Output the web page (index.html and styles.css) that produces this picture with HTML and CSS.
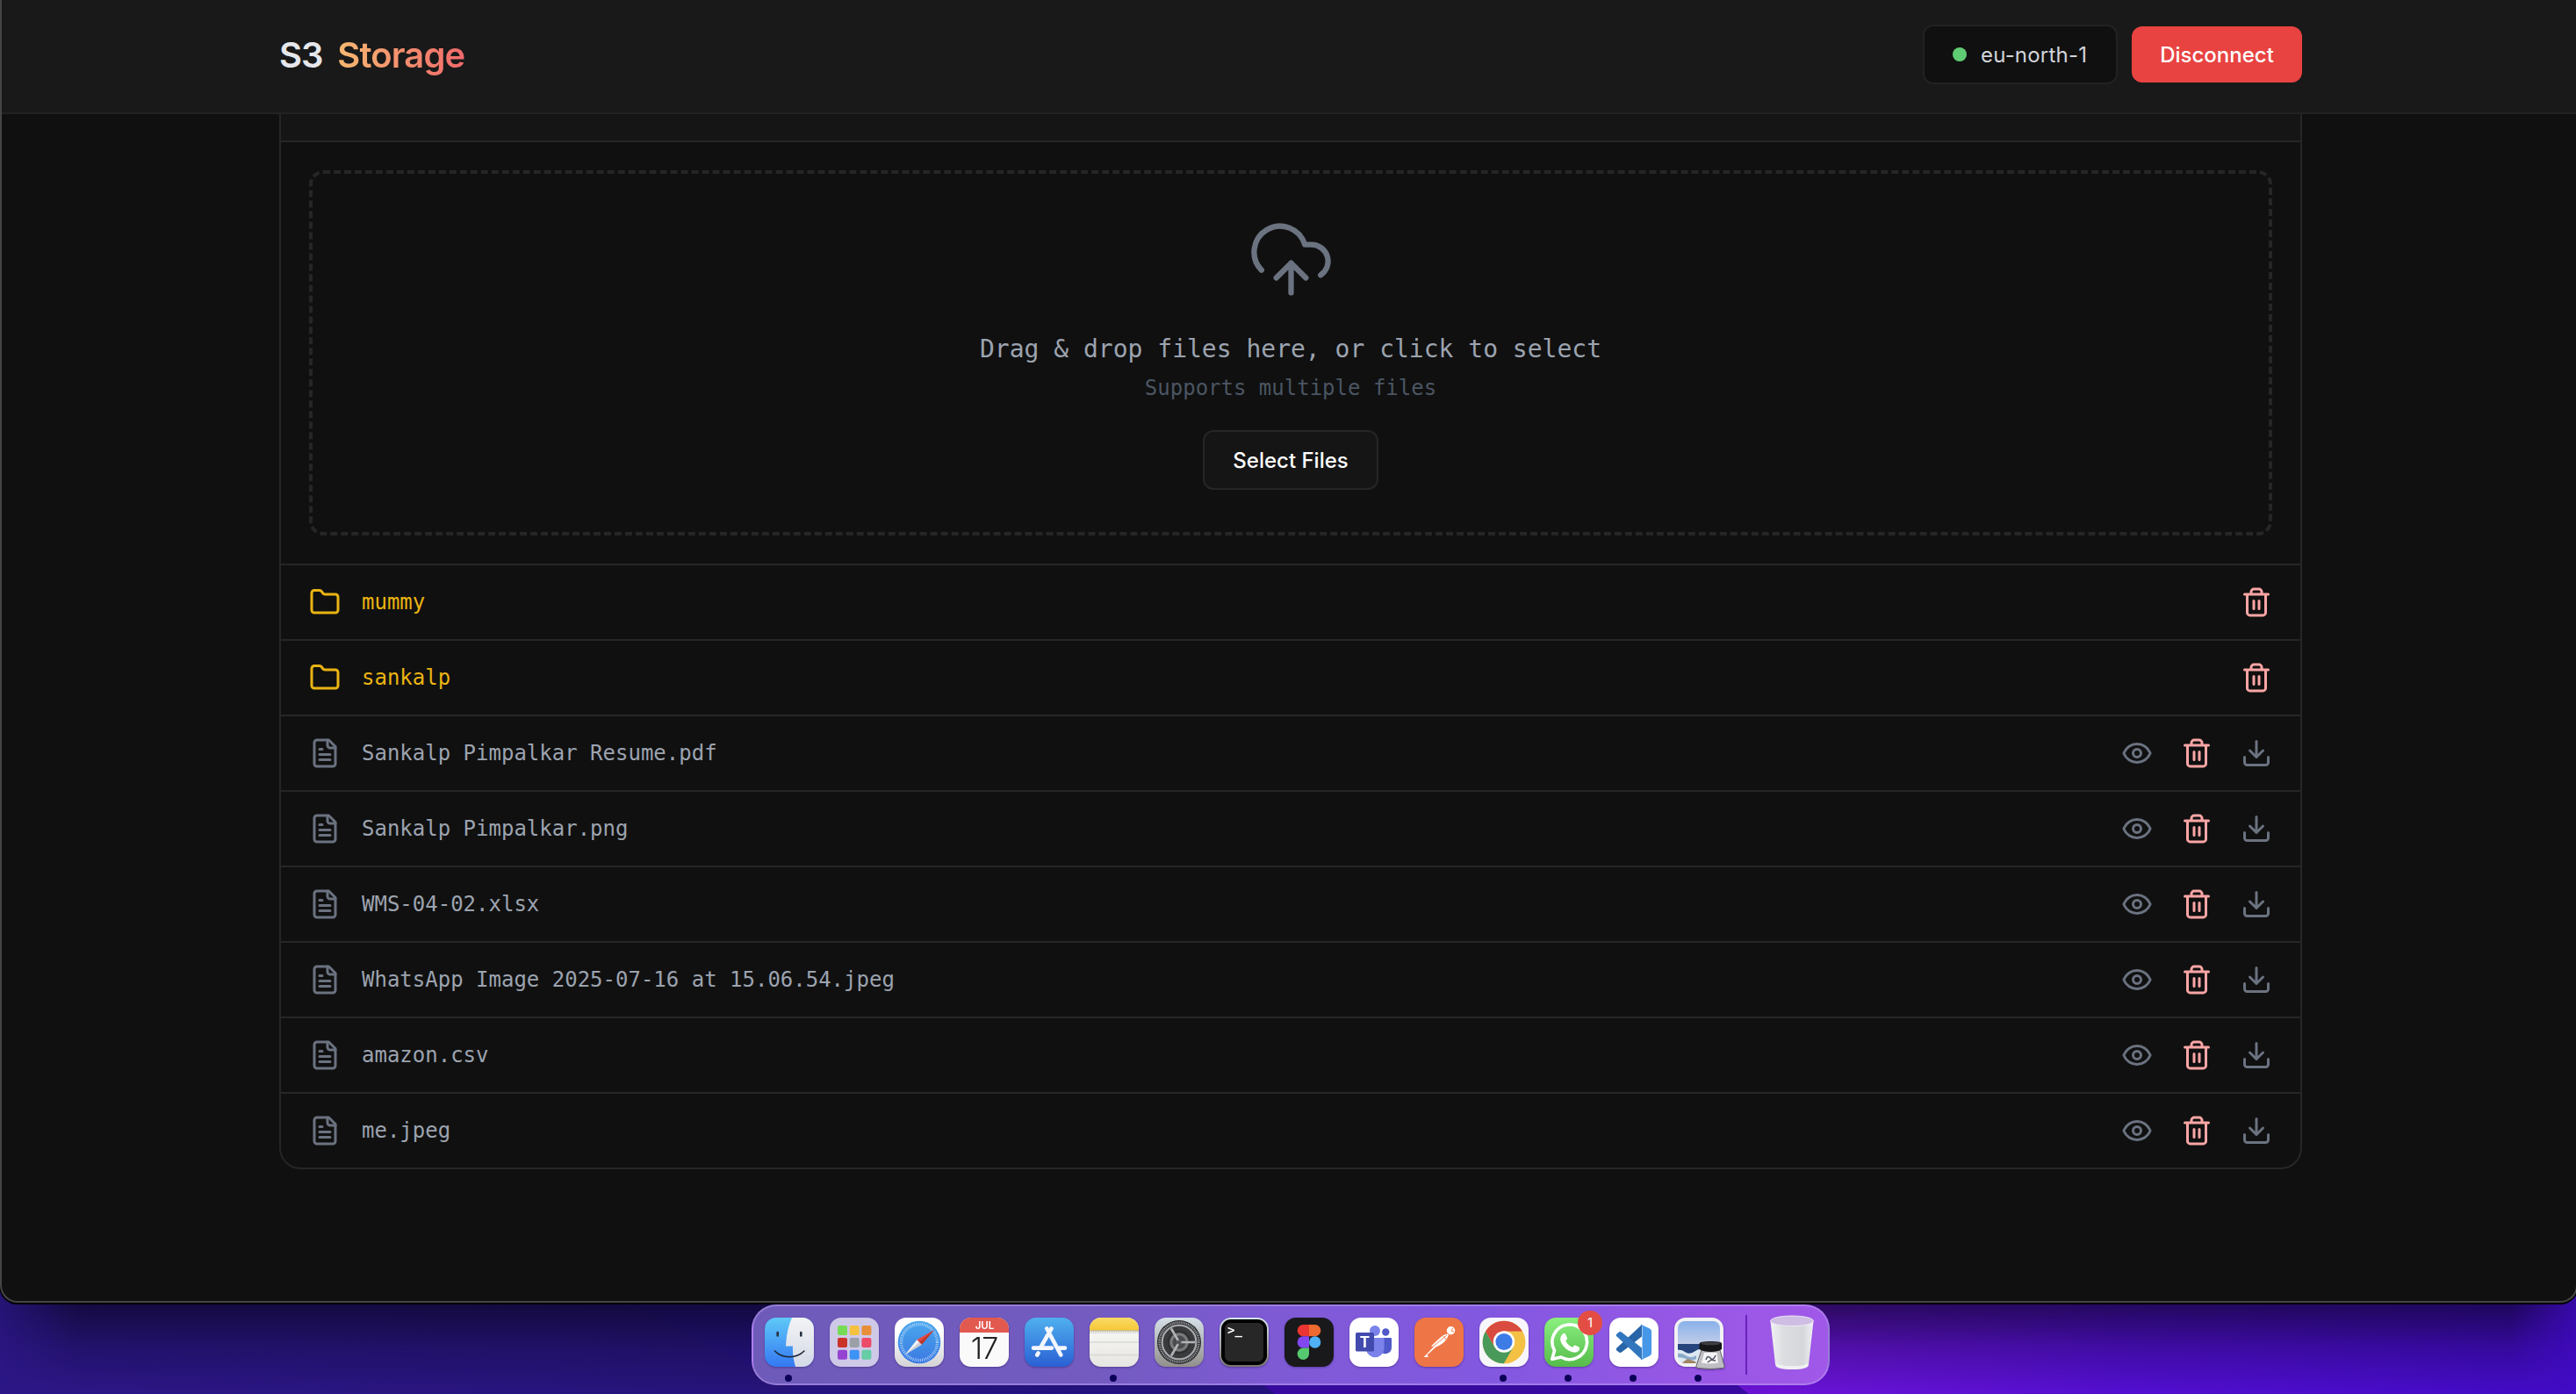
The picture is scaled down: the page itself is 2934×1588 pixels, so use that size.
FILE: index.html
```html
<!DOCTYPE html>
<html lang="en">
<head>
<meta charset="utf-8">
<title>S3 Storage</title>
<link rel="stylesheet" href="styles.css">
</head>
<body>
<svg class="sprite" aria-hidden="true">
  <symbol id="folder" viewBox="0 0 24 24"><path d="M20 20a2 2 0 0 0 2-2V8a2 2 0 0 0-2-2h-7.900a2 2 0 0 1-1.690-.9L9.600 3.900A2 2 0 0 0 7.930 3H4a2 2 0 0 0-2 2v13a2 2 0 0 0 2 2Z"/></symbol>
  <symbol id="file" viewBox="0 0 24 24"><path d="M15 2H6a2 2 0 0 0-2 2v16a2 2 0 0 0 2 2h12a2 2 0 0 0 2-2V7Z"/><path d="M14 2v4a2 2 0 0 0 2 2h4M10 9H8M16 13H8M16 17H8"/></symbol>
  <symbol id="trash" viewBox="0 0 24 24"><path d="M3 6h18M19 6v14c0 1-1 2-2 2H7c-1 0-2-1-2-2V6M8 6V4c0-1 1-2 2-2h4c1 0 2 1 2 2v2M10 11v6M14 11v6"/></symbol>
  <symbol id="eye" viewBox="0 0 24 24"><path d="M2.062 12.348a1 1 0 0 1 0-.696 10.750 10.750 0 0 1 19.876 0 1 1 0 0 1 0 .696 10.750 10.750 0 0 1-19.876 0"/><circle cx="12" cy="12" r="3"/></symbol>
  <symbol id="download" viewBox="0 0 24 24"><path d="M21 15v4a2 2 0 0 1-2 2H5a2 2 0 0 1-2-2v-4M7 10l5 5 5-5M12 15V3"/></symbol>
</svg>

<svg class="wallpaper" viewBox="0 0 2934 148" preserveAspectRatio="none" aria-hidden="true">
  <defs>
    <linearGradient id="wl" x1="0" x2="1"><stop offset="0" stop-color="#2d1788"/><stop offset=".35" stop-color="#27147a"/><stop offset="1" stop-color="#1d1268"/></linearGradient>
    <linearGradient id="wr" x1="0" x2="1"><stop offset="0" stop-color="#5a10c0"/><stop offset=".2" stop-color="#6d14d8"/><stop offset=".55" stop-color="#530fd2"/><stop offset="1" stop-color="#420bc6"/></linearGradient>
    <linearGradient id="ws" x1="0" x2="0" y1="0" y2="1"><stop offset="0" stop-color="#07041a" stop-opacity=".72"/><stop offset=".28" stop-color="#07041a" stop-opacity=".66"/><stop offset=".65" stop-color="#07041a" stop-opacity=".24"/><stop offset="1" stop-color="#07041a" stop-opacity="0"/></linearGradient>
    <linearGradient id="edge" x1="0" x2="1"><stop offset="0" stop-color="#444"/><stop offset=".03" stop-color="#fff"/><stop offset=".975" stop-color="#fff"/><stop offset="1" stop-color="#444"/></linearGradient>
    <mask id="em"><rect width="2934" height="148" fill="url(#edge)"/></mask>
  </defs>
  <rect width="2934" height="148" fill="url(#wl)"/>
  <path d="M690 30 914 148H1452L1330 30Z" fill="#23128a" opacity=".45"/>
  <path d="M1300 30 1452 148H2934V0H1300Z" fill="#390ba2"/>
  <path d="M1800 0H2934V148H1992Z" fill="url(#wr)"/>
  <rect width="2934" height="148" fill="url(#ws)" mask="url(#em)"/>
</svg>

<div class="window">
  <header class="topbar">
    <h1 class="brand">S3 <span class="brand-accent">Storage</span></h1>
    <div class="topbar-actions">
      <span class="region"><i class="region-dot"></i>eu-north-1</span>
      <button class="disconnect">Disconnect</button>
    </div>
  </header>
  <main class="panel">
    <div class="panel-head"></div>
    <section class="upload">
      <div class="dropzone">
        <svg class="cloud" viewBox="0 0 24 24"><path d="M12 13v8M4 14.899A7 7 0 1 1 15.710 8h1.790a4.500 4.500 0 0 1 2.500 8.242M8 17l4-4 4 4"/></svg>
        <p class="drop-title">Drag &amp; drop files here, or click to select</p>
        <p class="drop-note">Supports multiple files</p>
        <button class="select">Select Files</button>
      </div>
    </section>
    <ul class="files">
      <li class="row folder"><svg class="icon"><use href="#folder"/></svg><span class="name">mummy</span><svg class="icon danger"><use href="#trash"/></svg></li>
      <li class="row folder"><svg class="icon"><use href="#folder"/></svg><span class="name">sankalp</span><svg class="icon danger"><use href="#trash"/></svg></li>
      <li class="row"><svg class="icon"><use href="#file"/></svg><span class="name">Sankalp Pimpalkar Resume.pdf</span><svg class="icon"><use href="#eye"/></svg><svg class="icon danger"><use href="#trash"/></svg><svg class="icon"><use href="#download"/></svg></li>
      <li class="row"><svg class="icon"><use href="#file"/></svg><span class="name">Sankalp Pimpalkar.png</span><svg class="icon"><use href="#eye"/></svg><svg class="icon danger"><use href="#trash"/></svg><svg class="icon"><use href="#download"/></svg></li>
      <li class="row"><svg class="icon"><use href="#file"/></svg><span class="name">WMS-04-02.xlsx</span><svg class="icon"><use href="#eye"/></svg><svg class="icon danger"><use href="#trash"/></svg><svg class="icon"><use href="#download"/></svg></li>
      <li class="row"><svg class="icon"><use href="#file"/></svg><span class="name">WhatsApp Image 2025-07-16 at 15.06.54.jpeg</span><svg class="icon"><use href="#eye"/></svg><svg class="icon danger"><use href="#trash"/></svg><svg class="icon"><use href="#download"/></svg></li>
      <li class="row"><svg class="icon"><use href="#file"/></svg><span class="name">amazon.csv</span><svg class="icon"><use href="#eye"/></svg><svg class="icon danger"><use href="#trash"/></svg><svg class="icon"><use href="#download"/></svg></li>
      <li class="row"><svg class="icon"><use href="#file"/></svg><span class="name">me.jpeg</span><svg class="icon"><use href="#eye"/></svg><svg class="icon danger"><use href="#trash"/></svg><svg class="icon"><use href="#download"/></svg></li>
    </ul>
  </main>
</div>

<nav class="dock">
  <div class="app running"><svg class="tile" viewBox="0 0 56 56">
    <defs><linearGradient id="fb" x2="0" y2="1"><stop stop-color="#5fc9f8"/><stop offset="1" stop-color="#3478f2"/></linearGradient><linearGradient id="fw" x2="0" y2="1"><stop stop-color="#f3f3f5"/><stop offset="1" stop-color="#d3dae6"/></linearGradient><clipPath id="sq"><rect width="56" height="56" rx="13"/></clipPath></defs>
    <g clip-path="url(#sq)"><rect width="56" height="56" fill="url(#fb)"/><path d="M31 0C27 9 24.500 20 24 32.500H32C31.500 41 33 49 35 56H56V0Z" fill="url(#fw)"/></g>
    <path d="M14.700 17v3.500M41.300 17v3.500" stroke="#263040" stroke-width="2.600" stroke-linecap="round"/><path d="M11.500 38C20 47 36 47 45 38" fill="none" stroke="#1c2430" stroke-width="1.500" stroke-linecap="round"/></svg></div>

  <div class="app"><svg class="tile" viewBox="0 0 56 56">
    <rect width="56" height="56" rx="13" fill="#cfc9e8"/>
    <g><rect x="9" y="9" width="11" height="11" rx="2" fill="#76dc55"/><rect x="22.700" y="9" width="11" height="11" rx="2" fill="#f5c13e"/><rect x="36.400" y="9" width="11" height="11" rx="2" fill="#e78f38"/><rect x="9" y="22.900" width="11" height="11" rx="2" fill="#c93328"/><rect x="22.700" y="22.900" width="11" height="11" rx="2" fill="#9aa0a6"/><rect x="36.400" y="22.900" width="11" height="11" rx="2" fill="#ec4a68"/><rect x="9" y="36.800" width="11" height="11" rx="2" fill="#9444d0"/><rect x="22.700" y="36.800" width="11" height="11" rx="2" fill="#3d92f5"/><rect x="36.400" y="36.800" width="11" height="11" rx="2" fill="#66cda5"/></g></svg></div>

  <div class="app"><svg class="tile" viewBox="0 0 56 56">
    <defs><linearGradient id="sf" x2="0" y2="1"><stop offset=".3" stop-color="#fff"/><stop offset="1" stop-color="#d3d3d6"/></linearGradient><linearGradient id="sb" x2="0" y2="1"><stop stop-color="#4aa8ee"/><stop offset="1" stop-color="#3b79e2"/></linearGradient></defs>
    <rect width="56" height="56" rx="13" fill="url(#sf)"/><circle cx="28" cy="28" r="24.300" fill="url(#sb)"/><circle cx="28" cy="28" r="20.500" fill="none" stroke="#d8ebff" stroke-width="3.400" stroke-dasharray=".8 1.350" opacity=".8"/>
    <path d="M45 14 25.300 25.300 30.700 30.700Z" fill="#e8483f"/><path d="M12 42 25.300 25.300 30.700 30.700Z" fill="#f4f4f6"/><path d="M45 14 28 28 30.700 30.700Z" fill="#b8372f"/><path d="M12 42 28 28 30.700 30.700Z" fill="#c9cdd4"/></svg></div>

  <div class="app"><svg class="tile" viewBox="0 0 56 56">
    <rect width="56" height="56" rx="13" fill="#fafafa"/><path d="M0 17V13A13 13 0 0 1 13 0H43A13 13 0 0 1 56 13V17Z" fill="#e2594f"/>
    <text class="cal-month" x="28.500" y="13">JUL</text><text class="cal-day" x="28" y="47">17</text></svg></div>

  <div class="app"><svg class="tile" viewBox="0 0 56 56">
    <defs><linearGradient id="as" x2="0" y2="1"><stop stop-color="#4fb0ee"/><stop offset="1" stop-color="#2a5fd4"/></linearGradient></defs>
    <rect width="56" height="56" rx="13" fill="url(#as)"/><g stroke="#f3f6fc" stroke-width="4.600" stroke-linecap="round" fill="none"><path d="M30.500 12.500 18 34.500M25.300 12.500l16 30M10 34.600H31M39 34.600h7M15.500 40.500l-1.200 2"/></g></svg></div>

  <div class="app running"><svg class="tile" viewBox="0 0 56 56">
    <defs><linearGradient id="nt" x2="0" y2="1"><stop stop-color="#fadb66"/><stop offset="1" stop-color="#f5c737"/></linearGradient><linearGradient id="np" x2="0" y2="1"><stop stop-color="#fcfcfb"/><stop offset="1" stop-color="#e6e5e1"/></linearGradient></defs>
    <rect width="56" height="56" rx="13" fill="url(#np)"/><path d="M0 14.500V13A13 13 0 0 1 13 0H43A13 13 0 0 1 56 13V14.500Z" fill="url(#nt)"/><path d="M0 15H56" stroke="#a89b78"/><path d="M0 17.200H56" stroke="#b9b6b0" stroke-width="1.600" stroke-dasharray=".8 1.200"/><path d="M0 28H56M0 42.500H56" stroke="#d8d7d3" stroke-width="1.600"/></svg></div>

  <div class="app"><svg class="tile" viewBox="0 0 56 56">
    <defs><linearGradient id="st" x2="0" y2="1"><stop stop-color="#d5e0e8"/><stop offset="1" stop-color="#928f8c"/></linearGradient></defs>
    <rect width="56" height="56" rx="13" fill="url(#st)"/><circle cx="28" cy="28" r="25" fill="#27282a"/><circle cx="28" cy="28" r="22.500" fill="none" stroke="#9a9da0" stroke-width="2.600" stroke-dasharray="1.200 .9"/><circle cx="28" cy="28" r="19.400" fill="#3a3b3d" stroke="#a7aaad" stroke-width="2.200"/><circle cx="28" cy="28" r="12" fill="#77797b" stroke="#303133" stroke-width="2.500"/><circle cx="28" cy="28" r="7.500" fill="#4a4b4d"/><path d="M28 28H46M28 28 19 12.500M28 28 19 43.500" stroke="#b2b5b8" stroke-width="2.600"/><circle cx="28" cy="28" r="2.600" fill="#55575a"/></svg></div>

  <div class="app"><svg class="tile" viewBox="0 0 56 56">
    <defs><linearGradient id="tm" x2="0" y2="1"><stop stop-color="#d5e4ee"/><stop offset="1" stop-color="#7a756f"/></linearGradient></defs>
    <rect width="56" height="56" rx="13" fill="url(#tm)"/><rect x="2" y="2" width="52" height="52" rx="11" fill="#000"/><rect x="6" y="6" width="44" height="44" rx="6" fill="#272727"/><text class="prompt" x="9" y="18.500">&gt;_</text></svg></div>

  <div class="app"><svg class="tile" viewBox="0 0 56 56">
    <rect width="56" height="56" rx="13" fill="#19191b"/><path d="M28 8H21.300a6.650 6.650 0 0 0 0 13.300H28Z" fill="#eb3532"/><path d="M28 8h6.700a6.650 6.650 0 0 1 0 13.300H28Z" fill="#ee6a30"/><path d="M28 21.300H21.300a6.650 6.650 0 0 0 0 13.300H28Z" fill="#8347f0"/><circle cx="34.700" cy="28" r="6.650" fill="#4fb1f7"/><path d="M28 34.600H21.300A6.650 6.650 0 1 0 28 41.300Z" fill="#56ca6f"/></svg></div>

  <div class="app"><svg class="tile" viewBox="0 0 56 56">
    <rect width="56" height="56" rx="13" fill="#fff"/><circle cx="41.300" cy="16.500" r="4.200" fill="#5059c9"/><path d="M36 23H47a1 1 0 0 1 1 1V34a7 7 0 0 1-12 5Z" fill="#5059c9"/><circle cx="29" cy="15" r="6" fill="#7b83eb"/><path d="M19 23H38a1.500 1.500 0 0 1 1.500 1.500V36a10.300 10.300 0 0 1-20.500 0Z" fill="#7b83eb"/><rect x="7" y="17" width="21" height="21.500" rx="1.500" fill="#434aae"/><text class="teams-t" x="17.500" y="33.500">T</text></svg></div>

  <div class="app"><svg class="tile" viewBox="0 0 56 56">
    <rect width="56" height="56" rx="13" fill="#ee7546"/><circle cx="41.500" cy="14.700" r="4.700" fill="#fff"/><path d="M38 18.500C33 19 30 22 19 32.500L22 33 15 40.500 10.500 45H16L14.500 42.500 24.500 33.500C31 31 36 27 39 20Z" fill="#fff"/><path d="M37 20 21 33M33 21l3 4M42 15l2-3M42 15l3 1" stroke="#ee7546" stroke-width=".9"/></svg></div>

  <div class="app running"><svg class="tile" viewBox="0 0 56 56">
    <rect width="56" height="56" rx="13" fill="#f7f6fb"/><circle cx="28" cy="28" r="24.300" fill="#f4c145"/><path d="M6.960 15.850A24.300 24.300 0 0 1 49.040 15.850H28L17.500 34Z" fill="#d94b3f"/><path d="M6.960 15.850A24.300 24.300 0 0 0 28 52.300L38.520 34.070 17.480 34.070Z" fill="#49995a"/><path d="M28 15.850H49.040A24.300 24.300 0 0 1 28 52.300L38.520 34.070Z" fill="#f4c145"/><circle cx="28" cy="27.500" r="12.200" fill="#fff"/><circle cx="28" cy="27.500" r="9.600" fill="#3d7be6"/></svg></div>

  <div class="app running"><svg class="tile" viewBox="0 0 56 56">
    <defs><linearGradient id="wa" x2="0" y2="1"><stop stop-color="#8af07f"/><stop offset="1" stop-color="#56bb4b"/></linearGradient></defs>
    <rect width="56" height="56" rx="13" fill="url(#wa)"/><path d="M8.800 47.300 11.500 37.500A19.800 19.800 0 1 1 19 45Z" fill="none" stroke="#fff" stroke-width="3.600" stroke-linejoin="round"/><path d="M21 18.500c1-1 2.500-1 3 .2l2 4.500c.3 1-.8 2.200-1.800 3.200 2 3.800 4.300 5.800 8 7.400 1-1 1.800-2.800 3-2.300l4.200 2c1.200.6.8 3-.3 4.200-3 3-7.500 2-11.500-.2-4-2.300-7.500-6.200-9-10.500-1-3.500 0-6.300 2.400-8.500Z" fill="#fff"/></svg><span class="badge">1</span></div>

  <div class="app running"><svg class="tile" viewBox="0 0 56 56">
    <rect width="56" height="56" rx="13" fill="#fff"/><path d="M37 8 8.500 34.500c-1 1-1 2 0 3L11 39.500c1 .7 1.800.6 2.800 0L37 21.500Z" fill="#2865a8"/><path d="M37 48 8.500 21.500c-1-1-1-2 0-3L11 16.500c1-.7 1.800-.6 2.800 0L37 34.500Z" fill="#3277bd"/><path d="M36 8.300 46 13c1 .5 1.500 1.200 1.500 2.300V40.700c0 1-.5 1.800-1.500 2.300L36 47.700c1.200 0 2-.8 2-2.200V10.500c0-1.300-.8-2.200-2-2.200Z" fill="#4697e8" stroke="#4697e8"/></svg></div>

  <div class="app running"><svg class="tile" viewBox="0 0 56 56">
    <defs><linearGradient id="sky" x2="0" y2="1"><stop stop-color="#7faeea"/><stop offset="1" stop-color="#c4cde8"/></linearGradient><clipPath id="pv"><rect x="4" y="4" width="48" height="48" rx="8"/></clipPath></defs>
    <rect width="56" height="56" rx="13" fill="#f2f1f4"/><g clip-path="url(#pv)"><rect width="56" height="31" fill="url(#sky)"/><rect y="30" width="56" height="12" fill="#27457c"/><path d="M0 38q7-3 12 1t12-1 12 3h20V56H0Z" fill="#dde8f2"/><path d="M0 42q7-3 13 1t12 0V47q-6 3-12 0T0 46Z" fill="#8cabc9"/><path d="M8 52 15 47 24 50 26 56H8Z" fill="#a08565"/></g>
    <path d="M31 37 25 55q-1 2 2 2.500 14 2 28 0 3-.5 2-2.500L52 37Z" fill="#bfbfc3" stroke="#616166"/><path d="M34 40 31 51.500q10 2 19 0L48.500 40Z" fill="#f4f4f7"/><path d="M36 48q2-6 5-2t6-3M38 51l4-3 5 1" fill="none" stroke="#505463" stroke-width="1.500"/><path d="M28.500 29.500q0-2.500 13-2.500t12.500 2.500V36q-4 3-12.500 3T28.500 36Z" fill="#151517"/><ellipse cx="41.300" cy="29.500" rx="11" ry="1.800" fill="#3e3e42"/></svg></div>

  <i class="dock-divider"></i>
  <div class="bin"><svg class="bin-art" viewBox="0 0 50 64">
    <defs><linearGradient id="bn" x2="1" y2="0"><stop stop-color="#f2f2f4"/><stop offset=".3" stop-color="#dcdde0"/><stop offset=".75" stop-color="#d6d7da"/><stop offset="1" stop-color="#f0f0f3"/></linearGradient></defs>
    <path d="M.500 7 6 56q1 6 19 6t19-6L49.500 7Z" fill="url(#bn)"/><path d="M6 54q2 4 19 4t19-4l-.5 4q-2 4-18.500 4T6.500 58Z" fill="#fafafa" opacity=".7"/><ellipse cx="25" cy="6.800" rx="24.400" ry="5.800" fill="#cfbde4" stroke="#eeeaf5"/></svg></div>
</nav>
</body>
</html>
```
FILE: styles.css
```css
* { box-sizing: border-box; margin: 0; padding: 0; }

body {
  position: relative;
  width: 2934px;
  height: 1588px;
  overflow: hidden;
  background: #1d1268;
  font-family: Inter, "Liberation Sans", sans-serif;
  display: flex;
  flex-direction: column;
}

.sprite { position: absolute; width: 0; height: 0; }

.wallpaper {
  position: absolute;
  left: 0;
  bottom: 0;
  width: 2934px;
  height: 148px;
}

/* browser window */
.window {
  position: relative;
  flex: none;
  width: 2936px;
  height: 1484px;
  background: #101010;
  border: 2px solid #454545;
  border-top: 0;
  border-radius: 0 0 20px 20px;
  box-shadow: 0 1px 0 1px #000;
  overflow: hidden;
}

.topbar {
  height: 130px;
  padding: 28px 312px 32px 316px;
  display: flex;
  align-items: center;
  justify-content: space-between;
  background: #191919;
  border-bottom: 2px solid #222;
}

.brand { padding-top: 2px; font-size: 40px; font-weight: 600; line-height: 56px; color: #e5e7eb; letter-spacing: -.9px; word-spacing: 7.5px; }
.brand-accent {
  background: linear-gradient(90deg, #f7b871, #f1696b);
  -webkit-background-clip: text;
  background-clip: text;
  color: transparent;
}

.topbar-actions { display: flex; align-items: center; gap: 16px; }

.region {
  width: 222px;
  height: 68px;
  padding-left: 32px;
  display: flex;
  align-items: center;
  gap: 16px;
  border: 2px solid #222;
  border-radius: 12px;
  background: #101010;
  color: #d1d5db;
  font-size: 24px;
  letter-spacing: .2px;
}
.region-dot { width: 16px; height: 16px; border-radius: 50%; background: #5fcb73; }

button { font-family: Inter, "Liberation Sans", sans-serif; font-size: 24px; font-weight: 500; color: #fff; }
.disconnect { width: 194px; height: 64px; border: 0; border-radius: 12px; background: #e84341; }

/* bucket panel */
.panel {
  width: 2304px;
  margin-left: 316px;
  border: 2px solid #262626;
  border-top: 0;
  border-radius: 0 0 24px 24px;
  font-family: "DejaVu Sans Mono", monospace;
}
.panel-head { height: 32px; background: #151515; border-bottom: 2px solid #262626; }
.upload { padding: 32px; }

.dropzone {
  height: 416px;
  padding-top: 47px;
  border: 4px dashed #262626;
  border-radius: 16px;
  display: flex;
  flex-direction: column;
  align-items: center;
}
.cloud, .icon {
  flex: none;
  fill: none;
  stroke: #6b7280;
  stroke-width: 2;
  stroke-linecap: round;
  stroke-linejoin: round;
}
.cloud { width: 101px; height: 101px; margin-bottom: 32px; stroke-width: 1.5; }
.drop-title { font-size: 28px; line-height: 40px; margin-bottom: 4px; color: #9ca3af; }
.drop-note { font-size: 24px; line-height: 40px; margin-bottom: 28px; color: #4b5563; }
.select { width: 200px; height: 68px; border: 2px solid #262626; border-radius: 12px; background: #151515; }

.files { list-style: none; }
.row {
  height: 86px;
  padding: 0 32px;
  display: flex;
  align-items: center;
  gap: 32px;
  border-top: 2px solid #262626;
  color: #9ca3af;
}
.icon { width: 36px; height: 36px; }
.name { flex: 1; margin-left: -8px; font-size: 24px; line-height: 36px; }
.folder { color: #eab412; }
.folder .icon { stroke: #eab412; }
.row .icon.danger { stroke: #fca5a5; }

/* dock */
.dock {
  position: relative;
  width: 1228px;
  height: 92px;
  margin: 2px 0 0 856px;
  padding: 0 16px 0 13px;
  display: flex;
  align-items: flex-start;
  gap: 18px;
  border: 2px solid rgba(190, 160, 245, .5);
  border-radius: 28px;
  background: linear-gradient(90deg, #6e5bb9 0%, #735bc0 32%, #7f5ad6 50%, #8258e0 68%, #9a57e6 90%, #a058e8 100%);
}
.app {
  position: relative;
  flex: none;
  width: 56px;
  height: 88px;
  padding-top: 13px;
  display: flex;
  flex-direction: column;
  align-items: center;
  gap: 9px;
}
.tile { flex: none; width: 56px; height: 56px; overflow: visible; filter: drop-shadow(0 1px 1px rgba(20, 0, 60, .35)); }
.running::after { content: ""; width: 8px; height: 8px; border-radius: 50%; background: #0c0058; margin-left: -2px; }
.badge {
  position: absolute;
  top: 5px;
  right: -10px;
  width: 28px;
  height: 28px;
  border-radius: 50%;
  background: #e34d43;
  color: #fff;
  font-size: 15px;
  line-height: 28px;
  text-align: center;
}
.dock-divider { flex: none; width: 2px; height: 68px; margin: 10px 0 0 7px; background: #6a22bb; }
.bin { margin: 10px 0 0 8px; }
.bin-art { display: block; width: 50px; height: 64px; }

.tile text { font-family: Inter, "Liberation Sans", sans-serif; }
.tile .cal-month { font-size: 11.500px; font-weight: 600; fill: #fff; text-anchor: middle; }
.tile .cal-day { font-size: 34px; font-weight: 300; fill: #222; text-anchor: middle; letter-spacing: -1px; }
.tile .prompt { font-family: "DejaVu Sans Mono", monospace; font-size: 14px; font-weight: 700; fill: #fff; }
.tile .teams-t { font-size: 17px; font-weight: 700; fill: #fff; text-anchor: middle; }
```
